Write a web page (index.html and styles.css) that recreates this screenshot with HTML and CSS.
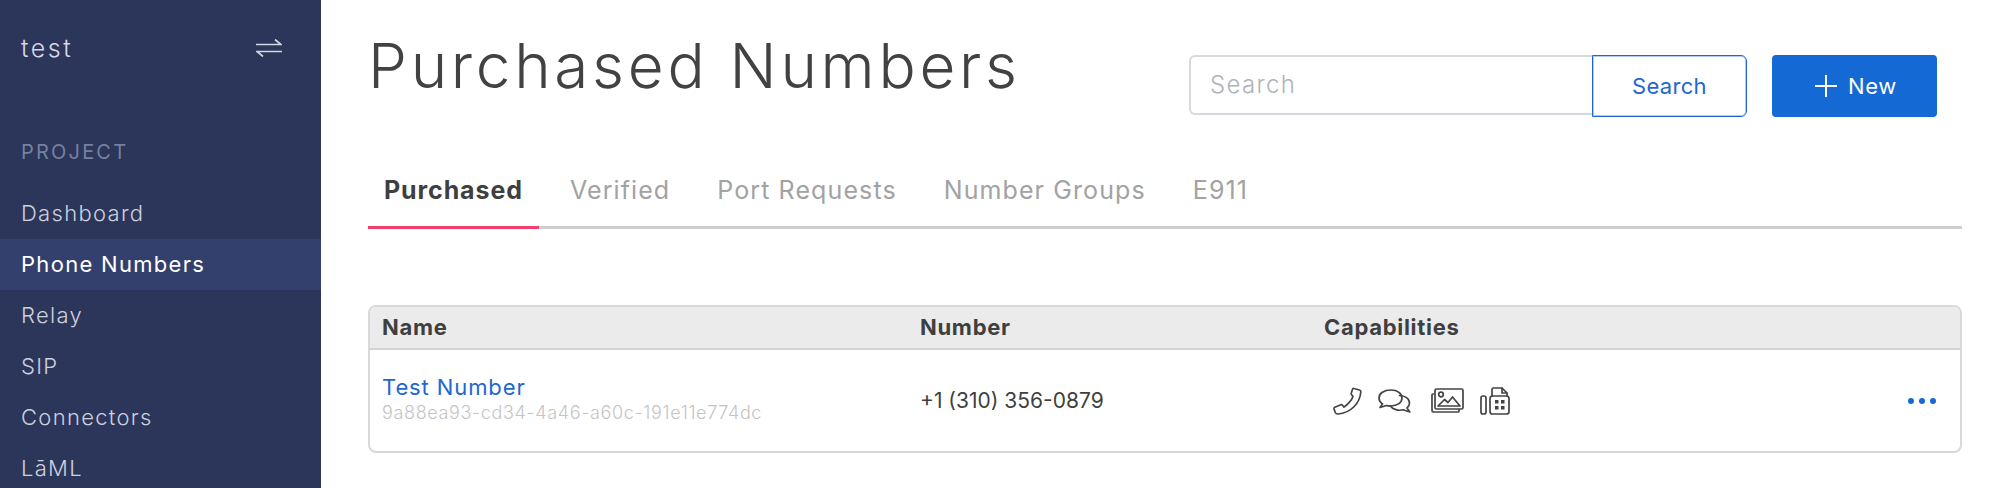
FILE: index.html
```html
<!DOCTYPE html>
<html lang="en">

<head>
    <meta charset="UTF-8">
    <title>Purchased Numbers</title>
    <link rel="stylesheet" href="styles.css">
</head>

<body>
    <aside class="sidebar">
        <div class="project-row">
            <span class="project-name">test</span>
            <svg class="swap-icon" viewBox="0 0 26 18" width="26" height="18">
                <path d="M0 5.500H25L19 .5M26 12.500H1L7 17.500" />
            </svg>
        </div>
        <div class="nav-title">PROJECT</div>
        <nav class="nav">
            <a class="nav-item">Dashboard</a>
            <a class="nav-item active">Phone Numbers</a>
            <a class="nav-item">Relay</a>
            <a class="nav-item">SIP</a>
            <a class="nav-item">Connectors</a>
            <a class="nav-item">LāML</a>
        </nav>
    </aside>

    <main class="main">
        <header class="page-header">
            <h1 class="page-title">Purchased Numbers</h1>
            <div class="search-group">
                <input class="search-input" type="text" placeholder="Search">
                <button class="search-btn">Search</button>
            </div>
            <button class="new-btn">
                <svg viewBox="0 0 24 24" width="24" height="24">
                    <path d="M12 1V23M1 12H23" />
                </svg>
                New
            </button>
        </header>

        <div class="tabs">
            <a class="tab active">Purchased</a>
            <a class="tab">Verified</a>
            <a class="tab">Port Requests</a>
            <a class="tab">Number Groups</a>
            <a class="tab">E911</a>
        </div>

        <div class="table">
            <div class="table-row table-head">
                <div>Name</div>
                <div>Number</div>
                <div>Capabilities</div>
            </div>
            <div class="table-row table-body">
                <div class="number-cell">
                    <a class="number-name">Test Number</a>
                    <div class="number-id">9a88ea93-cd34-4a46-a60c-191e11e774dc</div>
                </div>
                <div class="number-value">+1 (310) 356-0879</div>
                <div class="caps">
                    <!-- voice -->
                    <svg class="cap-phone" viewBox="0 0 29 28" width="29" height="28">
                        <path d="M21 1.500L26.500 3Q28 3.500 27.800 5C27 16 18 26 5 27Q3 27.200 2.300 25.500L1 22Q.7 21 1.800 20.300L7.800 17.800Q8.800 17.400 9.500 18.300L11 20.100C14 18 19 13 20 9.500L18.500 7.500Q17.900 6.700 18.400 5.800L19.500 2.300Q20 1.200 21 1.500Z" />
                    </svg>
                    <!-- messaging -->
                    <svg class="cap-chat" viewBox="0 0 33 24" width="33" height="24">
                        <path d="M13 1C6 1 1 4.500 1 9C1 11.500 2.300 13.500 4.500 15L2 18.500L8.500 16.500C10 17 11.500 17.100 13 17C19.500 17 24 13.500 24 9C24 4.500 19.500 1 13 1Z" />
                        <path d="M21.500 6.500C27 6.800 31.500 9.500 31.500 14C31.500 16 30.500 17.800 29 19L31.800 23L25 20.800C20.500 22 14.500 20.500 12.500 17" />
                    </svg>
                    <!-- fax media -->
                    <svg class="cap-picture" viewBox="0 0 33 25" width="33" height="25">
                        <path d="M2.500 6H1.800Q1 6 1 7V22.500Q1 24 2.500 24H27Q28 24 28 23V21.500" />
                        <rect x="4" y="1" width="28" height="20" rx="1.500" />
                        <circle cx="10" cy="6.500" r="2.300" />
                        <path d="M7 18L13.500 11.500L17 14.500L21.500 9L29 18Z" />
                    </svg>
                    <!-- fax -->
                    <svg class="cap-fax" viewBox="0 0 30 28" width="30" height="28">
                        <rect x="1" y="9" width="5" height="18" rx="2" />
                        <path d="M12 9V2.500Q12 1 13.500 1H22L27 6V9" />
                        <path d="M22 1V6H27" />
                        <rect x="10" y="9" width="19" height="18" rx="2.500" />
                        <path class="keypad" d="M15 13h3.500v3.500h-3.500zM21 13h3.500v3.500h-3.500zM15 19h3.500v3.500h-3.500zM21 19h3.500v3.500h-3.500z" />
                    </svg>
                </div>
                <div class="row-menu"><span></span><span></span><span></span></div>
            </div>
        </div>
    </main>
</body>

</html>
```

FILE: styles.css
```css
* {
    box-sizing: border-box;
}

html,
body {
    height: 488px;
    overflow: hidden;
}

body {
    margin: 0;
    display: flex;
    font-family: 'Inter', 'Noto Sans', sans-serif;
    background-color: #ffffff;
    color: #3f3f3f;
}

.sidebar {
    width: 321px;
    flex-shrink: 0;
    background-color: #2c365a;
    color: #cdd1dd;
    font-weight: 300;
}

.project-row {
    display: flex;
    align-items: center;
    justify-content: space-between;
    padding: 34px 39px 0 21px;
    height: 62px;
}

.project-name {
    font-size: 25px;
    letter-spacing: 2.500px;
    color: #d5d8e2;
}

.swap-icon {
    fill: none;
    stroke: #d5d8e2;
    stroke-width: 1.700;
}

.nav-title {
    margin-top: 76px;
    padding-left: 21px;
    font-size: 20px;
    line-height: 28px;
    font-weight: 400;
    letter-spacing: 2.200px;
    color: #76809f;
}

.nav {
    margin-top: 22px;
}

.nav-item {
    display: block;
    height: 51px;
    line-height: 51px;
    padding-left: 21px;
    font-size: 22px;
    letter-spacing: 1.300px;
}

.nav-item.active {
    background-color: #33406d;
    color: #ffffff;
    font-weight: 400;
}

.main {
    flex: 1;
    padding: 0 37px 0 47px;
}

.page-header {
    display: flex;
    align-items: flex-start;
    height: 139px;
    padding-top: 55px;
}

.page-title {
    flex: 1;
    margin: -30px 0 0;
    font-size: 62px;
    line-height: 82px;
    font-weight: 300;
    letter-spacing: 3.700px;
    color: #424242;
}

.search-group {
    display: flex;
    height: 62px;
    margin-right: 25px;
}

.search-input {
    width: 403px;
    height: 60px;
    padding: 0 19px 2px;
    border: 2px solid #d5dae1;
    border-right: none;
    border-radius: 6px 0 0 6px;
    font-family: inherit;
    font-size: 24px;
    font-weight: 300;
    letter-spacing: 1.300px;
    outline: none;
}

.search-input::placeholder {
    color: #aeb3ba;
}

.search-btn {
    width: 155px;
    border: 1px solid #1e67d1;
    border-radius: 0 6px 6px 0;
    box-shadow: inset 0 0 0 1px rgba(30, 103, 209, .35);
    background-color: #ffffff;
    color: #1e67d1;
    font-family: inherit;
    font-size: 22px;
    letter-spacing: .3px;
}

.new-btn {
    display: flex;
    align-items: center;
    justify-content: center;
    gap: 10px;
    width: 165px;
    height: 62px;
    margin-right: 25px;
    padding-right: 4px;
    border: none;
    border-radius: 4px;
    background-color: #1469d4;
    color: #ffffff;
    font-family: inherit;
    font-size: 22px;
    letter-spacing: .6px;
}

.new-btn svg {
    fill: none;
    stroke: #ffffff;
    stroke-width: 2;
}

.tabs {
    display: flex;
    height: 90px;
    border-bottom: 3px solid #cecece;
}

.tab {
    height: 90px;
    padding: 0 16px;
    margin-right: 15px;
    line-height: 102px;
    font-size: 25px;
    letter-spacing: 1.100px;
    color: #a2a2a2;
}

.tab.active {
    border-bottom: 3px solid #f0406e;
    color: #3f3f3f;
    font-weight: 700;
    letter-spacing: .9px;
}

.table {
    margin-top: 76px;
    height: 148px;
    border: 2px solid #d9d9d9;
    border-radius: 8px;
    overflow: hidden;
}

.table-row {
    display: grid;
    grid-template-columns: 538px 404px 1fr auto;
    align-items: center;
    padding-left: 12px;
}

.table-head {
    height: 43px;
    padding-bottom: 2px;
    background-color: #ebebeb;
    border-bottom: 2px solid #d4d4d4;
    font-size: 22px;
    font-weight: 700;
    letter-spacing: .7px;
    color: #3f3f3f;
}

.table-body {
    height: 101px;
    padding-right: 24px;
}

.number-cell {
    padding-bottom: 3px;
}

.number-name {
    display: block;
    margin-bottom: 2px;
    font-size: 22px;
    line-height: 26px;
    letter-spacing: .9px;
    color: #1e67d1;
}

.number-id {
    font-size: 18px;
    line-height: 22px;
    font-weight: 300;
    letter-spacing: .64px;
    color: #c4c4c4;
}

.number-value {
    font-size: 21px;
}

.caps {
    display: flex;
    align-items: center;
    padding-left: 9px;
}

.caps svg {
    fill: none;
    stroke: #444444;
    stroke-width: 1.700;
    stroke-linejoin: round;
    stroke-linecap: round;
}

.cap-phone {
    margin-right: 16px;
}

.cap-chat {
    margin-right: 20px;
}

.cap-picture {
    margin-right: 16px;
}

.caps .keypad {
    fill: #444444;
    stroke: none;
}

.row-menu {
    display: flex;
    gap: 5px;
}

.row-menu span {
    width: 6px;
    height: 6px;
    border-radius: 50%;
    background-color: #1469d4;
}
```
